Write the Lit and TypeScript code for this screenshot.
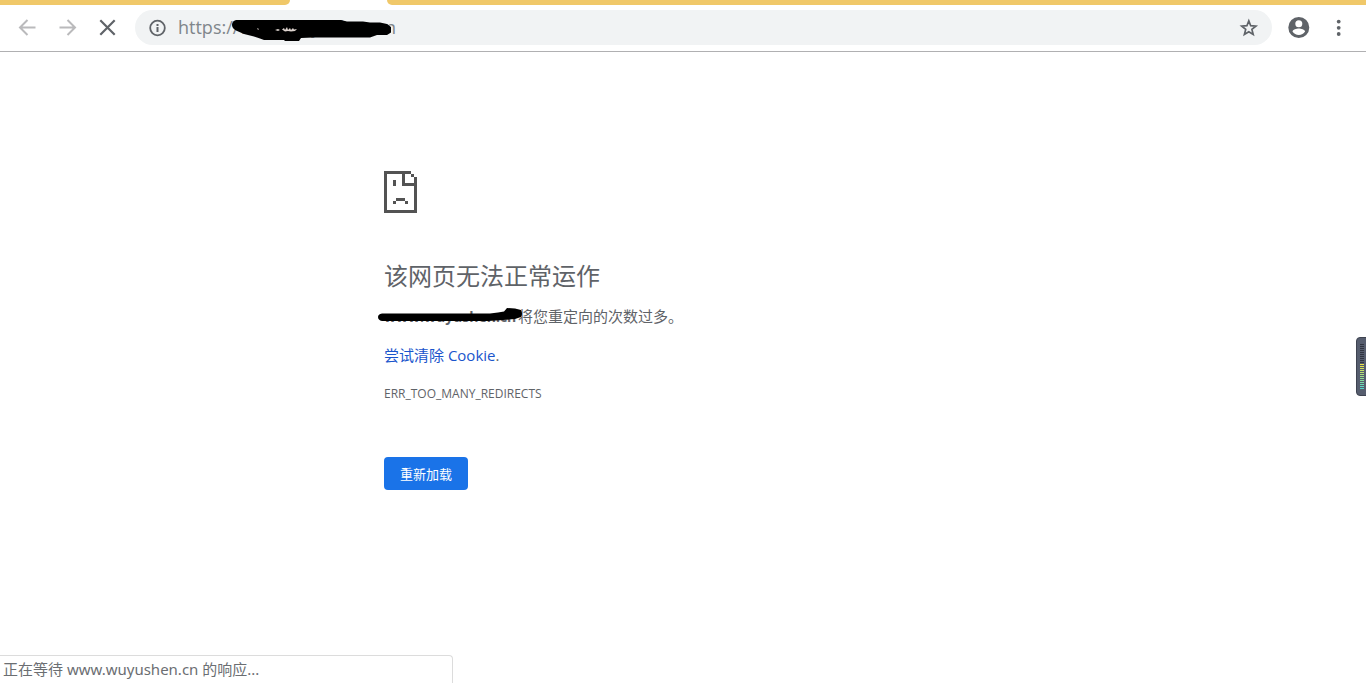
import { LitElement, html, css, svg } from "lit";
import { customElement } from "lit/decorators.js";

@customElement("browser-toolbar")
class BrowserToolbar extends LitElement {
  static styles = css`
    :host {
      display: block;
      font-family: "Noto Sans", "Noto Sans CJK SC", sans-serif;
    }
    .tabs {
      display: flex;
      height: 5px;
      background: #fff;
    }
    .strip {
      background: #f0c869;
    }
    .left {
      width: 290px;
      border-bottom-right-radius: 5px;
    }
    .right {
      flex: 1;
      margin-left: 97px;
      border-bottom-left-radius: 5px;
    }
    .bar {
      display: flex;
      align-items: flex-start;
      padding: 5px 15px 6px;
      border-bottom: 1px solid #b0b0b2;
      background: #fff;
    }
    .icon {
      display: block;
      padding: 0;
      border: 0;
      background: none;
      color: #5f6368;
      width: 24px;
      height: 24px;
      flex: none;
    }
    .icon svg {
      display: block;
      width: 24px;
      height: 24px;
    }
    .icon:disabled {
      color: #bababc;
    }
    .nav,
    .end {
      display: flex;
      gap: 16px;
      padding-top: 5px;
    }
    .nav {
      margin-right: 16px;
    }
    .end {
      margin-left: 15px;
    }
    .box {
      position: relative;
      display: flex;
      align-items: center;
      flex: 1;
      height: 35px;
      padding: 0 12px;
      border-radius: 18px;
      background: #f1f3f4;
    }
    .box .icon,
    .box .icon svg {
      width: 22px;
      height: 22px;
    }
    .url {
      flex: 1;
      min-width: 0;
      margin-left: 9px;
      padding: 0;
      border: 0;
      outline: 0;
      background: none;
      color: #80868b;
      font: 18px/23px "Open Sans", "Noto Sans", sans-serif;
    }
    .ink {
      position: absolute;
      left: 95px;
      top: 7px;
      width: 164px;
      height: 26px;
    }
  `;

  render() {
    return html`
      <div class="tabs">
        <div class="strip left"></div>
        <div class="strip right"></div>
      </div>
      <div class="bar">
        <div class="nav">
          <button class="icon" disabled aria-label="后退">
            <svg viewBox="0 0 24 24" fill="none" stroke="currentColor" stroke-width="2">
              <path d="M20.500 12.500H5.500M12.500 5L5 12.500L12.500 20" />
            </svg>
          </button>
          <button class="icon" disabled aria-label="前进">
            <svg viewBox="0 0 24 24" fill="none" stroke="currentColor" stroke-width="2">
              <path d="M4.500 12.500H19.500M12.500 5L20 12.500L12.500 20" />
            </svg>
          </button>
          <button class="icon" aria-label="停止加载">
            <svg viewBox="0 0 24 24" fill="none" stroke="currentColor" stroke-width="2.200">
              <path d="M5.300 5.300L19.700 19.700M19.700 5.300L5.300 19.700" />
            </svg>
          </button>
        </div>
        <div class="box">
          <button class="icon" aria-label="网站信息">
            <svg viewBox="0 0 22 22">
              <circle cx="10.500" cy="11" r="7.300" fill="none" stroke="currentColor" stroke-width="1.800" />
              <path d="M9.500 6.900h2v2H9.500zM9.500 10h2v5H9.500z" fill="currentColor" />
            </svg>
          </button>
          <input class="url" aria-label="地址" value="https://www.wuyushen.cn" spellcheck="false" />
          <svg class="ink" viewBox="0 0 164 26" aria-hidden="true">
            <path
              d="M6 3H111L117 4.500H133L140 5.500H150L157 7L161 10V15.500L157 18H147L140 20.500H83L71 21L69 24H55L54 23H34L30 21.500L24 19.500L14 17L6 13.500Q2 11 2 8Q2 4 6 3Z"
            />
            <path
              d="M27 11l2 1l-1 1zM45 13l3-1l2 1l-2 1zM52 12.500l2-1.500l1 2l2-3l1 3l2-2l1 2l2-2l1 1.500l3-.5l-2 2l-4 .5l-3-.5l-3 .5z"
              fill="#ddd3ce"
            />
          </svg>
          <button class="icon" aria-label="添加书签">
            <svg viewBox="0 0 22 22">
              <path
                d="M10.800 3.900L12.700 8.700L17.900 9.100L13.900 12.400L15.200 17.500L10.800 14.700L6.400 17.500L7.700 12.400L3.700 9.100L8.900 8.700Z"
                fill="none"
                stroke="currentColor"
                stroke-width="1.700"
              />
            </svg>
          </button>
        </div>
        <div class="end">
          <button class="icon" aria-label="用户">
            <svg viewBox="0 0 24 24">
              <path
                fill="currentColor"
                fill-rule="evenodd"
                d="M11.800 2a10.500 10.500 0 1 0 0 21a10.500 10.500 0 0 0 0-21zM11.800 5.300a3.500 3.500 0 1 1 0 7a3.500 3.500 0 0 1 0-7zM11.800 20a7.500 7.500 0 0 1-6.300-3.400c0-2.100 4.200-3.200 6.300-3.200s6.300 1.100 6.300 3.200a7.500 7.500 0 0 1-6.300 3.400z"
              />
            </svg>
          </button>
          <button class="icon" aria-label="菜单">
            <svg viewBox="0 0 24 24" fill="currentColor">
              <circle cx="11.700" cy="6.600" r="1.900" />
              <circle cx="11.700" cy="12.800" r="1.900" />
              <circle cx="11.700" cy="19" r="1.900" />
            </svg>
          </button>
        </div>
      </div>
    `;
  }
}

@customElement("error-page")
class ErrorPage extends LitElement {
  static styles = css`
    :host {
      display: block;
      box-sizing: border-box;
      width: 100%;
      max-width: 600px;
      margin: 0 auto;
      padding: 119px 0 0 1px;
      color: #5f6368;
      font: 15px/24px "Open Sans", "Noto Sans CJK SC", sans-serif;
    }
    .sad {
      display: block;
      width: 33px;
      height: 42px;
      margin-bottom: 48px;
    }
    h1 {
      margin: 0 0 13px;
      font-size: 24px;
      line-height: 30px;
      font-weight: 400;
    }
    p {
      margin: 0 0 15px;
    }
    .message {
      margin-bottom: 14px;
    }
    .host {
      position: relative;
      display: inline-block;
      width: 130px;
      white-space: nowrap;
      font-size: 14px;
      font-weight: 700;
    }
    .ink {
      position: absolute;
      left: -6px;
      top: 2px;
      width: 146px;
      height: 18px;
    }
    a {
      color: #1a55cc;
      text-decoration: none;
    }
    .code {
      font-size: 12px;
      margin-bottom: 51px;
    }
    .reload {
      display: block;
      height: 33px;
      padding: 0 16px;
      border: 0;
      border-radius: 4px;
      background: #1a73e8;
      color: #fff;
      font: 13px/33px "Noto Sans CJK SC", sans-serif;
    }
  `;

  render() {
    return html`
      <svg class="sad" viewBox="0 0 11 14" fill="#535353" shape-rendering="crispEdges" aria-hidden="true">
        <path
          d="M0 0H9V1H7V4H11V13H10V5H6V1H1V13H11V14H0ZM10 2H11V5H10ZM9 1H10V2H9ZM3 3H4V5H3ZM4 9H7V10H4ZM3 10H4V11H3ZM7 10H8V11H7Z"
        />
      </svg>
      <h1>该网页无法正常运作</h1>
      <p class="message">
        <strong class="host"
          >www.wuyushen.cn<svg class="ink" viewBox="0 0 146 18" aria-hidden="true">
            <path
              d="M4 6.500H112L120 5.500L126 4.500L129 1L137 1.500L143 3Q145 7 143 10L137 12L125 13L110 14H4Q0 13 0 10Q0 7 4 6.500Z"
            /></svg></strong>
        将您重定向的次数过多。
      </p>
      <p><a href="#">尝试清除 Cookie</a>.</p>
      <p class="code">ERR_TOO_MANY_REDIRECTS</p>
      <button class="reload">重新加载</button>
    `;
  }
}

@customElement("app-root")
class AppRoot extends LitElement {
  static styles = css`
    :host {
      display: block;
      position: relative;
      min-height: 100vh;
      background: #fff;
      overflow: hidden;
    }
    .status {
      position: absolute;
      left: 0;
      bottom: 0;
      box-sizing: border-box;
      width: 453px;
      height: 28px;
      padding-left: 3px;
      border: 1px solid #dcdcdc;
      border-width: 1px 1px 0 0;
      border-top-right-radius: 4px;
      background: #fff;
      color: #6b6e72;
      font: 15px/27px "Noto Sans", "Noto Sans CJK SC", sans-serif;
    }
    .meter {
      position: absolute;
      right: 0;
      top: 337px;
      width: 10px;
      height: 59px;
    }
  `;

  render() {
    const bars = Array.from({ length: 23 }, (_, i) => {
      const lit = i - 10;
      const fill = lit < 0 ? "#30343f" : `rgb(${236 - lit * 13} ${228 - lit} ${70 + lit * 11})`;
      return svg`<rect x="4" y=${7 + i * 2} width="4" height="1" shape-rendering="crispEdges" fill=${fill} />`;
    });
    return html`
      <browser-toolbar></browser-toolbar>
      <error-page></error-page>
      <svg class="meter" viewBox="0 0 10 59" aria-hidden="true">
        <path d="M10 .5H4Q.5 .5 .5 4V55Q.5 58.500 4 58.500H10" fill="#565d6e" stroke="#3e4350" />
        ${bars}
      </svg>
      <div class="status" role="status">正在等待 www.wuyushen.cn 的响应...</div>
    `;
  }
}
